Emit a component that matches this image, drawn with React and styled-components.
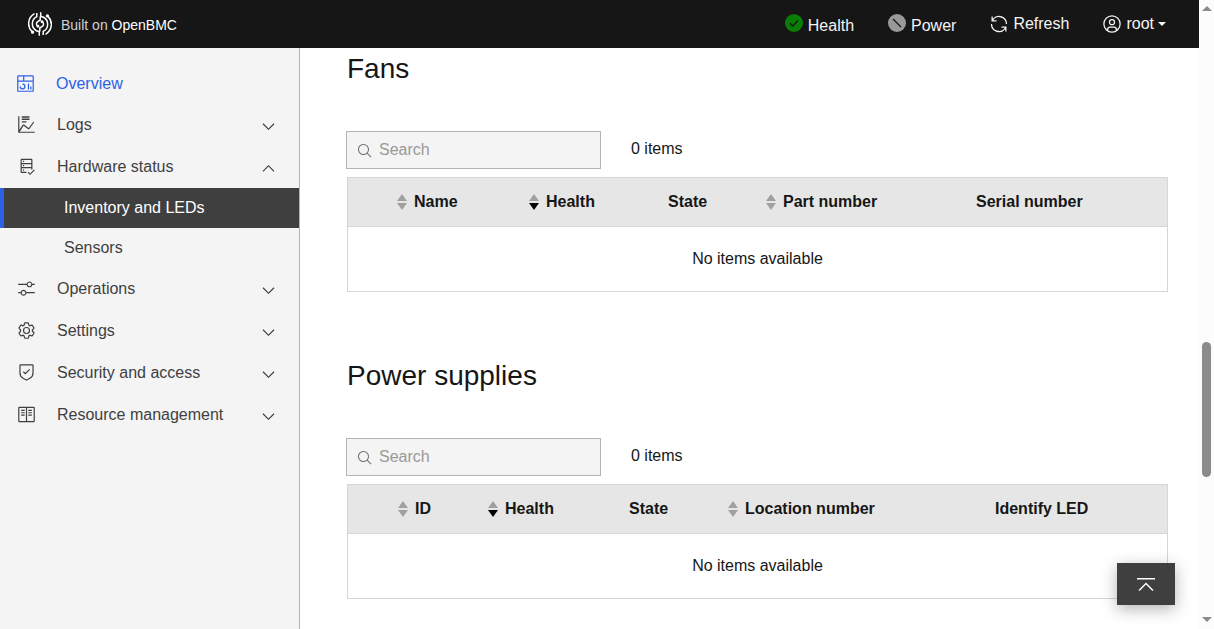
import React from "react";
import styled, { createGlobalStyle } from "styled-components";

const Global = createGlobalStyle`
  *, *::before, *::after { box-sizing: border-box; }
  body {
    margin: 0;
    background: #fff;
    color: #161616;
    font-family: "Liberation Sans", Arial, sans-serif;
    font-size: 16px;
    line-height: 24px;
  }
  button, input { font: inherit; }
`;

const Page = styled.div`
  display: grid;
  grid-template-columns: minmax(0, 1fr) 15px;
  height: 100vh;
  overflow: hidden;
`;

const Shell = styled.div`
  display: grid;
  grid-template-rows: 48px minmax(0, 1fr);
  min-height: 0;
`;

const Header = styled.header`
  display: flex;
  align-items: center;
  justify-content: space-between;
  padding: 0 33px 0 28px;
  background: #161616;
  color: #f4f4f4;
`;

const Brand = styled.a`
  display: flex;
  align-items: center;
  gap: 9px;
  color: #d0d0d0;
  font-size: 14px;
  line-height: 20px;
  text-decoration: none;
`;

const BrandText = styled.span`
  padding-top: 2px;
  strong {
    color: #fff;
    font-weight: 400;
  }
`;

const HeaderNav = styled.nav`
  display: flex;
  align-items: center;
  gap: 33px;
`;

const headerItem = `
  display: flex;
  align-items: center;
  gap: 4px;
  color: #f4f4f4;
`;

const StatusLink = styled.a`
  ${headerItem}
  text-decoration: none;
  svg { margin-bottom: 2px; }
  span { padding-top: 4px; }
`;

const HeaderButton = styled.button`
  ${headerItem}
  padding: 0;
  border: 0;
  background: none;
`;

const Caret = styled.i`
  border: 4px solid transparent;
  border-top-color: currentColor;
  border-bottom: 0;
`;

const Body = styled.div`
  display: grid;
  grid-template-columns: 300px minmax(0, 1fr);
  min-height: 0;
`;

const Sidebar = styled.nav`
  padding-top: 14px;
  border-right: 1px solid #b3b3b3;
  background: #f4f4f4;
`;

const List = styled.ul`
  margin: 0;
  padding: 0;
  list-style: none;
`;

const NavLink = styled.a`
  display: flex;
  align-items: center;
  gap: 21px;
  height: 42px;
  padding: 2px 16px 0;
  color: #2d60e5;
  text-decoration: none;
  svg { margin-bottom: 2px; }
`;

const NavButton = styled.button`
  display: flex;
  align-items: center;
  gap: 21px;
  width: 100%;
  height: 42px;
  padding: 0 20px 0 16px;
  border: 1px solid transparent;
  background: none;
  color: #3f3f3f;
  text-align: left;
  svg:first-child { margin-bottom: 2px; }
  svg:last-child { margin-top: 3px; }
`;

const NavLabel = styled.span`
  flex: 1;
`;

const SubLink = styled.a`
  display: flex;
  align-items: center;
  height: 40px;
  padding-left: 60px;
  border-left: 4px solid ${(p) => (p.$active ? "#2d60e5" : "transparent")};
  background: ${(p) => (p.$active ? "#3f3f3f" : "transparent")};
  color: ${(p) => (p.$active ? "#fff" : "#3f3f3f")};
  text-decoration: none;
`;

const Main = styled.main`
  padding: 0 31px 0 46px;
  overflow: hidden;
`;

const Section = styled.section`
  padding: 4px 0 63px;
`;

const Title = styled.h2`
  margin: 0 0 45px;
  padding-left: 1px;
  font-size: 28px;
  font-weight: 400;
  line-height: 34px;
`;

const Toolbar = styled.div`
  display: flex;
  align-items: center;
  gap: 30px;
  margin-bottom: 8px;
`;

const SearchBox = styled.label`
  display: flex;
  align-items: center;
  gap: 6px;
  width: 255px;
  height: 38px;
  padding: 0 10px;
  border: 1px solid #b3b3b3;
  background: #f4f4f4;
  color: #6f6f6f;
  svg { margin-top: 2px; }
`;

const SearchInput = styled.input`
  flex: 1;
  min-width: 0;
  padding: 0;
  border: 0;
  outline: 0;
  background: none;
  color: #161616;
  &::placeholder { color: #999; opacity: 1; }
`;

const Count = styled.p`
  margin: 0;
  padding-bottom: 2px;
`;

const TableFrame = styled.div`
  margin-left: 1px;
  border: 1px solid #d6d6d6;
`;

const Table = styled.table`
  width: 100%;
  border-collapse: separate;
  border-spacing: 0;
  table-layout: fixed;
`;

const HeadCell = styled.th`
  height: 49px;
  padding: 0 0 0 12px;
  border-bottom: 1px solid #d6d6d6;
  background: #e6e6e6;
  text-align: left;
  white-space: nowrap;
`;

const SortButton = styled.button`
  display: flex;
  align-items: center;
  gap: 7px;
  padding: 0;
  border: 0;
  background: none;
  color: inherit;
  font-weight: 700;
`;

const EmptyCell = styled.td`
  height: 64px;
  padding: 0;
  text-align: center;
`;

const TopButton = styled.button`
  position: fixed;
  right: 39px;
  bottom: 24px;
  display: flex;
  align-items: center;
  justify-content: center;
  width: 58px;
  height: 42px;
  padding: 0;
  border: 0;
  background: #3f3f3f;
  color: #fff;
  box-shadow: 0 4px 16px rgba(0, 0, 0, 0.3);
`;

const ScrollTrack = styled.div`
  display: grid;
  grid-template-rows: 16px 326fr 135fr 136fr 16px;
  justify-items: center;
  align-items: center;
  background: #fcfcfc;
`;

const ScrollThumb = styled.div`
  grid-row: 3;
  width: 9px;
  height: 100%;
  border-radius: 5px;
  background: #8b8b8b;
`;

const ScrollArrow = styled.i`
  grid-row: ${(p) => (p.$down ? 5 : 1)};
  align-self: ${(p) => (p.$down ? "start" : "center")};
  margin-top: ${(p) => (p.$down ? "4px" : "0")};
  border: 5px solid transparent;
  border-top: ${(p) => (p.$down ? "5px solid #8b8b8b" : "0")};
  border-bottom: ${(p) => (p.$down ? "0" : "5px solid #8b8b8b")};
`;

const paths = {
  dashboard: [
    "M24 21H26V26H24zM20 16H22V26H20zM11 26a5 5 0 01-5-5H8a3 3 0 103-3V16a5 5 0 010 10z",
    "M28,2H4A2,2,0,0,0,2,4V28a2,2,0,0,0,2,2H28a2,2,0,0,0,2-2V4A2,2,0,0,0,28,2Zm0,9H14V4H28ZM12,4v7H4V4ZM4,28V13H28V28Z",
  ],
  logs: [
    "M4.67,28l6.39-10,7.3,5.49a2,2,0,0,0,1.7.47,2,2,0,0,0,1.42-1.07L29,12.4,27.38,11.3,19.7,22l-7.3-5.49A2,2,0,0,0,10.71,16a2,2,0,0,0-1.42,1L4,25V2H2V28a2,2,0,0,0,2,2H30V28Z",
    "M8 2H21V4.500H8zM8 6H21V8.500H8zM8 10.500H16V12.500H8z",
  ],
  hardware: [
    "M24,3H8A2,2,0,0,0,6,5V25a2,2,0,0,0,2,2h8V25H8V19H24v2h2V5A2,2,0,0,0,24,3Zm0,14H8V12H24Zm0-7H8V5H24Z",
    "M10 6.500h2v2h-2zM10 13.500h2v2h-2zM10 21h2v2h-2zM22 27.600L19.400 25 18 26.400 22 30.400 30 22.400 28.600 21z",
  ],
  operations: [
    "M30 8h-4.100c-.5-2.300-2.500-4-4.900-4s-4.400 1.700-4.900 4H2v2h14.100c.5 2.300 2.500 4 4.900 4s4.400-1.700 4.900-4H30V8zM21 12c-1.700 0-3-1.300-3-3s1.300-3 3-3 3 1.300 3 3-1.300 3-3 3zM2 24h4.100c.5 2.300 2.500 4 4.900 4s4.400-1.700 4.900-4H30v-2H15.900c-.5-2.300-2.500-4-4.900-4s-4.400 1.700-4.900 4H2v2zM11 20c1.700 0 3 1.300 3 3s-1.300 3-3 3-3-1.300-3-3 1.300-3 3-3z",
  ],
  settings: [
    "M27,16.76c0-.25,0-.5,0-.76s0-.51,0-.77l1.92-1.68A2,2,0,0,0,29.3,11L26.94,7a2,2,0,0,0-1.73-1,2,2,0,0,0-.64.1l-2.43.82a11.35,11.35,0,0,0-1.31-.75l-.51-2.52a2,2,0,0,0-2-1.61H13.64a2,2,0,0,0-2,1.61l-.51,2.52a11.48,11.48,0,0,0-1.32.75L7.43,6.06A2,2,0,0,0,6.79,6,2,2,0,0,0,5.06,7L2.7,11a2,2,0,0,0,.41,2.51L5,15.24c0,.25,0,.5,0,.76s0,.51,0,.77L3.11,18.45A2,2,0,0,0,2.7,21L5.06,25a2,2,0,0,0,1.73,1,2,2,0,0,0,.64-.1l2.43-.82a11.35,11.35,0,0,0,1.31.75l.51,2.52a2,2,0,0,0,2,1.61h4.72a2,2,0,0,0,2-1.61l.51-2.52a11.48,11.48,0,0,0,1.32-.75l2.42.82a2,2,0,0,0,.64.1,2,2,0,0,0,1.73-1L29.3,21a2,2,0,0,0-.41-2.51ZM25.21,24l-3.43-1.16a8.86,8.86,0,0,1-2.71,1.57L18.36,28H13.64l-.71-3.55a9.36,9.36,0,0,1-2.7-1.57L6.79,24,4.43,20l2.72-2.4a8.9,8.9,0,0,1,0-3.13L4.43,12,6.79,8l3.43,1.16a8.86,8.86,0,0,1,2.71-1.57L13.64,4h4.72l.71,3.55a9.36,9.36,0,0,1,2.7,1.57L25.21,8,27.57,12l-2.72,2.4a8.9,8.9,0,0,1,0,3.13L27.57,20Z",
    "M16,22a6,6,0,1,1,6-6A5.94,5.94,0,0,1,16,22Zm0-10a3.91,3.91,0,0,0-4,4,3.91,3.91,0,0,0,4,4,3.91,3.91,0,0,0,4-4A3.91,3.91,0,0,0,16,12Z",
  ],
  security: [
    "M14 16.59L11.41 14 10 15.41 14 19.41 22 11.41 20.59 10z",
    "M16,30,9.82,26.71A10.98,10.98,0,0,1,4,17V4A2,2,0,0,1,6,2H26a2,2,0,0,1,2,2V17a10.98,10.98,0,0,1-5.82,9.71ZM6,4V17a8.99,8.99,0,0,0,4.77,7.94L16,27.73l5.23-2.79A8.99,8.99,0,0,0,26,17V4Z",
  ],
  resource: [
    "M28,3H4A2,2,0,0,0,2,5V27a2,2,0,0,0,2,2H28a2,2,0,0,0,2-2V5A2,2,0,0,0,28,3ZM4,5H15V27H4ZM28,27H17V5H28Z",
    "M7 8H13V10H7zM7 12H13V14H7zM7 16H13V18H7zM19 8H25V10H19zM19 12H25V14H19zM19 16H25V18H19z",
  ],
  down: ["M16 22L6 12 7.4 10.6 16 19.2 24.6 10.6 26 12z"],
  up: ["M16 10L26 20 24.6 21.4 16 12.8 7.4 21.4 6 20z"],
  renew: [
    "M12 10H6.78A11 11 0 0127 16h2A13 13 0 006 7.68V4H4v8h8zM20 22h5.22A11 11 0 015 16H3a13 13 0 0023 8.32V28h2V20H20z",
  ],
  user: [
    "M16,8a5,5,0,1,0,5,5A5,5,0,0,0,16,8Zm0,8a3,3,0,1,1,3-3A3,3,0,0,1,16,16Z",
    "M16,2A14,14,0,1,0,30,16,14,14,0,0,0,16,2ZM10,26.38V25a3,3,0,0,1,3-3h6a3,3,0,0,1,3,3v1.38a11.9,11.9,0,0,1-12,0Zm13.99-1.45A5,5,0,0,0,19,20H13a5,5,0,0,0-4.99,4.93,12,12,0,1,1,15.98,0Z",
  ],
  search: [
    "M29,27.59l-7.55-7.55a11.02,11.02,0,1,0-1.41,1.41L27.59,29ZM4,13a9,9,0,1,1,9,9A9,9,0,0,1,4,13Z",
  ],
  top: ["M16 14L6 24 7.4 25.4 16 16.8 24.6 25.4 26 24zM4 8H28V10H4z"],
};

function Icon({ name, size = 20 }) {
  return (
    <svg width={size} height={size} viewBox="0 0 32 32" fill="currentColor" aria-hidden="true">
      {paths[name].map((d) => (
        <path key={d} d={d} />
      ))}
    </svg>
  );
}

function StatusIcon({ ok }) {
  return (
    <svg width="20" height="20" viewBox="0 0 20 20" fill="none" aria-hidden="true">
      <circle cx="10" cy="10" r="9" fill={ok ? "#0a7d06" : "#999"} />
      <path d={ok ? "M6 10.200L8.800 13L14 7.500" : "M6 6L14 14"} stroke="#161616" strokeWidth="1.300" />
    </svg>
  );
}

const logoHalf = (
  <>
    <path d="M6.500 1.700A11.300 11.300 0 0 0 4 19.600" />
    <path d="M8.800 1V4.600A8 8 0 0 0 8 18.500L11.300 19.800V23.800" />
    <path d="M12.200 4.500V8L9.400 9.800A2.600 2.600 0 0 0 9.600 14" />
    <circle cx="4.600" cy="20.200" r="0.900" />
    <circle cx="10" cy="14.300" r="0.700" />
  </>
);

function Logo() {
  return (
    <svg width="24" height="24" viewBox="0 0 24 24" fill="none" stroke="#fff" strokeWidth="1.500" aria-hidden="true">
      <g>{logoHalf}</g>
      <g transform="rotate(180 12 12)">{logoHalf}</g>
    </svg>
  );
}

function SortIcon({ sorted }) {
  return (
    <svg width="10" height="16" viewBox="0 0 10 16" aria-hidden="true">
      <path d="M5 0L10 7H0z" fill="#a0a0a0" />
      <path d="M0 9H10L5 16z" fill={sorted ? "#000" : "#a0a0a0"} />
    </svg>
  );
}

const groups = [
  { icon: "logs", label: "Logs" },
  { icon: "hardware", label: "Hardware status", items: ["Inventory and LEDs", "Sensors"] },
  { icon: "operations", label: "Operations" },
  { icon: "settings", label: "Settings" },
  { icon: "security", label: "Security and access" },
  { icon: "resource", label: "Resource management" },
];

const inventories = [
  {
    title: "Fans",
    lead: 37,
    columns: [
      { label: "Name", width: 132, sortable: true },
      { label: "Health", width: 139, sortable: true, sorted: true },
      { label: "State", width: 98 },
      { label: "Part number", width: 210, sortable: true },
      { label: "Serial number", width: 203 },
    ],
  },
  {
    title: "Power supplies",
    lead: 38,
    columns: [
      { label: "ID", width: 90, sortable: true },
      { label: "Health", width: 141, sortable: true, sorted: true },
      { label: "State", width: 99 },
      { label: "Location number", width: 267, sortable: true },
      { label: "Identify LED", width: 184 },
    ],
  },
];

function Inventory({ title, lead, columns }) {
  return (
    <Section>
      <Title>{title}</Title>
      <Toolbar>
        <SearchBox>
          <Icon name="search" size={16} />
          <SearchInput type="text" placeholder="Search" aria-label={`Search ${title}`} />
        </SearchBox>
        <Count>0 items</Count>
      </Toolbar>
      <TableFrame>
        <Table>
          <colgroup>
            <col width={lead} />
            {columns.map((c) => (
              <col key={c.label} width={c.width} />
            ))}
          </colgroup>
          <thead>
            <tr>
              <HeadCell as="td" />
              {columns.map((c) => (
                <HeadCell key={c.label} scope="col">
                  {c.sortable ? (
                    <SortButton type="button">
                      <SortIcon sorted={c.sorted} />
                      {c.label}
                    </SortButton>
                  ) : (
                    c.label
                  )}
                </HeadCell>
              ))}
            </tr>
          </thead>
          <tbody>
            <tr>
              <EmptyCell colSpan={columns.length + 1}>No items available</EmptyCell>
            </tr>
          </tbody>
        </Table>
      </TableFrame>
    </Section>
  );
}

export default function App() {
  return (
    <Page>
      <Global />
      <Shell>
        <Header>
          <Brand href="#">
            <Logo />
            <BrandText>
              Built on <strong>OpenBMC</strong>
            </BrandText>
          </Brand>
          <HeaderNav>
            <StatusLink href="#health">
              <StatusIcon ok />
              <span>Health</span>
            </StatusLink>
            <StatusLink href="#power">
              <StatusIcon />
              <span>Power</span>
            </StatusLink>
            <HeaderButton type="button">
              <Icon name="renew" />
              Refresh
            </HeaderButton>
            <HeaderButton type="button">
              <Icon name="user" />
              root
              <Caret />
            </HeaderButton>
          </HeaderNav>
        </Header>
        <Body>
          <Sidebar>
            <List>
              <li>
                <NavLink href="#overview">
                  <Icon name="dashboard" size={19} />
                  Overview
                </NavLink>
              </li>
              {groups.map((g) => (
                <li key={g.label}>
                  <NavButton type="button" aria-expanded={Boolean(g.items)}>
                    <Icon name={g.icon} size={19} />
                    <NavLabel>{g.label}</NavLabel>
                    <Icon name={g.items ? "up" : "down"} size={19} />
                  </NavButton>
                  {g.items && (
                    <List>
                      {g.items.map((item, i) => (
                        <li key={item}>
                          <SubLink href="#" $active={i === 0}>
                            {item}
                          </SubLink>
                        </li>
                      ))}
                    </List>
                  )}
                </li>
              ))}
            </List>
          </Sidebar>
          <Main>
            {inventories.map((inv) => (
              <Inventory key={inv.title} {...inv} />
            ))}
          </Main>
        </Body>
      </Shell>
      <ScrollTrack aria-hidden="true">
        <ScrollArrow />
        <ScrollThumb />
        <ScrollArrow $down />
      </ScrollTrack>
      <TopButton type="button" aria-label="Scroll to top">
        <Icon name="top" size={24} />
      </TopButton>
    </Page>
  );
}
